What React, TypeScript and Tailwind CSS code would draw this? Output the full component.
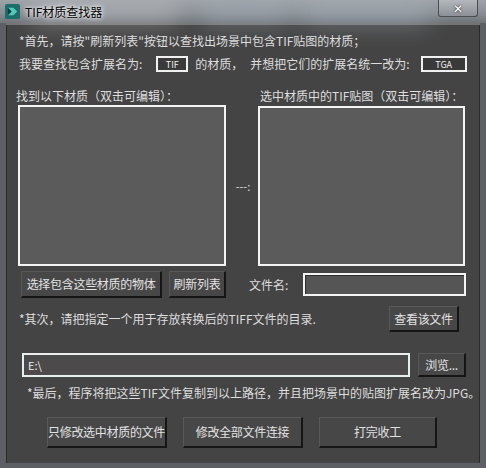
import React from 'react'

const font = { fontFamily: '"Noto Sans CJK SC", "DejaVu Sans", sans-serif' }

function MaxButton({ label, className = '' }: { label: string; className?: string }) {
  return (
    <button
      className={`flex items-center justify-center whitespace-nowrap border-t border-l border-t-[#585858] border-l-[#585858] border-r-2 border-b-2 border-r-[#151515] border-b-[#151515] bg-[#474747] p-0 text-[12px] tracking-[-0.3px] text-[#e2e2e2] ${className}`}
    >
      {label}
    </button>
  )
}

function ListBox({ className = '' }: { className?: string }) {
  return <div className={`border-2 border-[#f4f4f4] bg-[#5b5b5b] ${className}`} />
}

function ExtBox({ value }: { value: string }) {
  return (
    <div className="flex h-[16px] items-center justify-center border-2 border-[#f0f0f0] bg-[#3a3a3a] text-[9px] leading-none text-[#f0f0f0]">
      {value}
    </div>
  )
}

export default function App() {
  return (
    <div
      className="flex h-[468px] w-[486px] flex-col overflow-hidden bg-[#5c5f63] text-[12px] leading-[16px] text-[#dedede]"
      style={font}
    >
      {/* aero title bar */}
      <div className="relative flex h-[23px] shrink-0 items-center bg-[linear-gradient(180deg,#9ea3a8_0%,#8a8f95_55%,#6f7479_100%)]">
        <div className="pointer-events-none absolute left-[30px] top-[8px] h-[14px] w-[150px] rounded-full bg-white/40 blur-md" />
        <div className="pointer-events-none absolute left-[200px] top-[12px] h-[10px] w-[90px] rounded-full bg-[#cfe3f5]/50 blur-md" />
        <div className="pointer-events-none absolute left-[300px] top-[12px] h-[10px] w-[130px] rounded-full bg-[#d8ecff]/50 blur-md" />
        <svg className="relative ml-[5px] h-[15px] w-[15px]" viewBox="0 0 16 16">
          <rect x="0" y="0" width="16" height="16" rx="2" fill="#1d6e6a" />
          <path d="M3 4 L9 4 L13 8 L9 12 L3 12 L7 8 Z" fill="#4fc9b8" />
          <path d="M3 4 L7 8 L3 12 Z" fill="#0c3d3b" />
        </svg>
        <span className="relative ml-[5px] text-[12px] leading-none text-black [text-shadow:0_0_6px_#fff,0_0_3px_#fff]">
          TIF材质查找器
        </span>
        <div className="absolute right-[8px] top-0 flex h-[17px] w-[40px] items-center justify-center rounded-b-[3px] border border-t-0 border-[#4a4d52] bg-[linear-gradient(180deg,#b4b8bd,#8d9197)]">
          <span className="text-[12px] font-bold leading-none text-white [text-shadow:0_0_2px_#000]">✕</span>
        </div>
      </div>

      {/* window body */}
      <div className="mx-[6px] mb-[5px] flex-1 border-t-2 border-[#737373] bg-[#444444] shadow-[inset_1px_0_0_#2a2a2a,inset_-1px_0_0_#2a2a2a]">
        <div className="flex flex-col pl-[13px] pr-[13px]">
          <p className="mt-[8px] h-[16px] whitespace-nowrap">*首先，请按"刷新列表"按钮以查找出场景中包含TIF贴图的材质；</p>

          <div className="mt-[7px] flex h-[16px] items-center whitespace-nowrap">
            <span>我要查找包含扩展名为:</span>
            <div className="ml-[14px] w-[32px]">
              <ExtBox value="TIF" />
            </div>
            <span className="ml-[7px]">的材质，</span>
            <span className="ml-[7px]">并想把它们的扩展名统一改为:</span>
            <div className="ml-[11px] w-[46px]">
              <ExtBox value="TGA" />
            </div>
          </div>

          <div className="mt-[16px] flex h-[16px] whitespace-nowrap">
            <span className="-ml-[3px] w-[242px]">找到以下材质（双击可编辑）：</span>
            <span className="ml-[2px]">选中材质中的TIF贴图（双击可编辑）：</span>
          </div>

          <div className="mt-[1px] flex h-[161px] items-stretch">
            <ListBox className="-ml-[1px] w-[208px]" />
            <div className="flex w-[32px] items-center justify-center pl-[2px] text-[11px]">---:</div>
            <ListBox className="mt-[1px] w-[207px]" />
          </div>

          <div className="mt-[5px] flex h-[27px] items-center">
            <MaxButton label="选择包含这些材质的物体" className="ml-[2px] h-[27px] w-[141px]" />
            <MaxButton label="刷新列表" className="ml-[7px] h-[27px] w-[57px]" />
            <span className="ml-[23px]">文件名:</span>
            <div className="ml-[15px] h-[23px] w-[163px] border-2 border-[#f4f4f4] bg-[#555555] shadow-[inset_1px_1px_0_#2f2f2f]" />
          </div>

          <div className="mt-[8px] flex h-[26px] items-center">
            <span className="whitespace-nowrap">*其次，请把指定一个用于存放转换后的TIFF文件的目录.</span>
            <MaxButton label="查看该文件" className="ml-auto mr-[8px] h-[26px] w-[70px]" />
          </div>

          <div className="mt-[21px] flex h-[24px] items-stretch">
            <div className="ml-[3px] flex w-[388px] items-center border-2 border-[#e9efec] bg-[linear-gradient(180deg,#4a4a4a,#4f4a4b)] pl-[4px] text-[11px] text-[#f0f0f0]">
              E:\
            </div>
            <MaxButton label="浏览..." className="ml-[8px] w-[48px]" />
          </div>

          <p className="mt-[8px] h-[16px] whitespace-nowrap pl-[8px]">
            *最后，程序将把这些TIF文件复制到以上路径，并且把场景中的贴图扩展名改为JPG。
          </p>

          <div className="mt-[16px] flex h-[31px] gap-[16px] pl-[28px]">
            <MaxButton label="只修改选中材质的文件" className="w-[120px]" />
            <MaxButton label="修改全部文件连接" className="w-[120px]" />
            <MaxButton label="打完收工" className="w-[118px]" />
          </div>
        </div>
      </div>
    </div>
  )
}
